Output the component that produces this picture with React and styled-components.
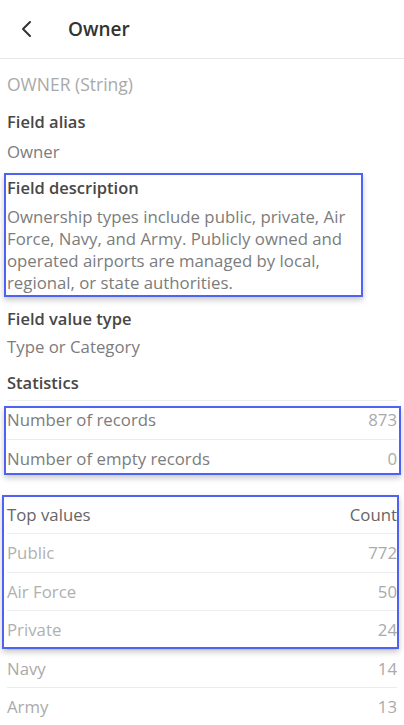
import React from 'react';
import styled, { createGlobalStyle } from 'styled-components';

const GlobalStyle = createGlobalStyle`
  body {
    margin: 0;
    background: #fff;
    font-family: 'Open Sans', Lato, sans-serif;
  }
`;

const Page = styled.div`
  width: 404px;
  min-height: 725px;
  background: #fff;
  overflow: hidden;
`;

const Header = styled.div`
  display: flex;
  align-items: center;
  height: 58px;
  border-bottom: 1px solid #e8e8e8;
  padding-left: 20px;
  gap: 34px;
`;

const Title = styled.div`
  font-size: 19px;
  font-weight: 600;
  color: #333;
`;

const Content = styled.div`
  padding: 14px 7px 0 7px;
`;

const FieldType = styled.div`
  font-size: 17.5px;
  line-height: 22px;
  color: #a9a9a9;
`;

const Section = styled.div`
  margin-top: ${(p) => p.$gap || 14}px;
`;

const Label = styled.div`
  font-size: 16.5px;
  line-height: 22px;
  font-weight: 600;
  color: #474747;
`;

const Value = styled.div`
  margin-top: ${(p) => p.$gap || 8}px;
  max-width: ${(p) => (p.$wrap ? `${p.$wrap}px` : 'none')};
  font-size: 16.8px;
  line-height: 22px;
  color: #7c7c7c;
`;

const Marked = styled.div`
  position: relative;
  &::after {
    content: '';
    position: absolute;
    top: ${(p) => p.$t}px;
    bottom: ${(p) => p.$b}px;
    left: ${(p) => p.$l}px;
    right: ${(p) => p.$r}px;
    border: 2px solid #5062f2;
    box-shadow: 0 3px 6px rgba(0, 0, 0, 0.22);
    pointer-events: none;
  }
`;

const Table = styled.div`
  margin-top: ${(p) => p.$gap || 0}px;
  border-top: ${(p) => (p.$topLine ? '1px solid #ececec' : 'none')};
`;

const Row = styled.div`
  display: flex;
  justify-content: space-between;
  align-items: center;
  height: 37.5px;
  font-size: 16.8px;
  color: ${(p) => p.$color || '#7c7c7c'};
  border-top: ${(p) => (p.$line ? '1px solid #ececec' : 'none')};
`;

const Num = styled.span`
  color: ${(p) => p.$color || '#aaa'};
`;

const Chevron = () => (
  <svg width="14" height="18" viewBox="0 0 14 18">
    <path d="M10 2 L3 9 L10 16" fill="none" stroke="#333" strokeWidth="2" strokeLinecap="round" strokeLinejoin="round" />
  </svg>
);

const topValues = [
  ['Public', 772],
  ['Air Force', 50],
  ['Private', 24],
];

const moreValues = [
  ['Navy', 14],
  ['Army', 13],
];

const App = () => (
  <Page>
    <GlobalStyle />
    <Header>
      <Chevron />
      <Title>Owner</Title>
    </Header>
    <Content>
      <FieldType>OWNER (String)</FieldType>
      <Section $gap={16}>
        <Label>Field alias</Label>
        <Value>Owner</Value>
      </Section>
      <Marked $t={-4} $b={-3} $l={-3} $r={34}>
        <Section>
          <Label>Field description</Label>
          <Value $gap={7} $wrap={352}>
            Ownership types include public, private, Air Force, Navy, and Army. Publicly owned and
            operated airports are managed by local, regional, or state authorities.
          </Value>
        </Section>
      </Marked>
      <Section>
        <Label>Field value type</Label>
        <Value $gap={6}>Type or Category</Value>
      </Section>
      <Section>
        <Label>Statistics</Label>
      </Section>
      <Marked $t={6} $b={2} $l={-3} $r={-4}>
        <Table $gap={6} $topLine>
          <Row>
            <span>Number of records</span>
            <Num>873</Num>
          </Row>
          <Row $line>
            <span>Number of empty records</span>
            <Num>0</Num>
          </Row>
        </Table>
      </Marked>
      <Table $gap={18.5}>
        <Marked $t={-1} $b={0} $l={-5} $r={-2}>
          <Row $color="#666">
            <span>Top values</span>
            <Num $color="#666">Count</Num>
          </Row>
          {topValues.map(([name, count]) => (
            <Row key={name} $color="#b0b0b0" $line>
              <span>{name}</span>
              <Num>{count}</Num>
            </Row>
          ))}
        </Marked>
        {moreValues.map(([name, count]) => (
          <Row key={name} $color="#aaa" $line>
            <span>{name}</span>
            <Num>{count}</Num>
          </Row>
        ))}
      </Table>
    </Content>
  </Page>
);

export default App;
